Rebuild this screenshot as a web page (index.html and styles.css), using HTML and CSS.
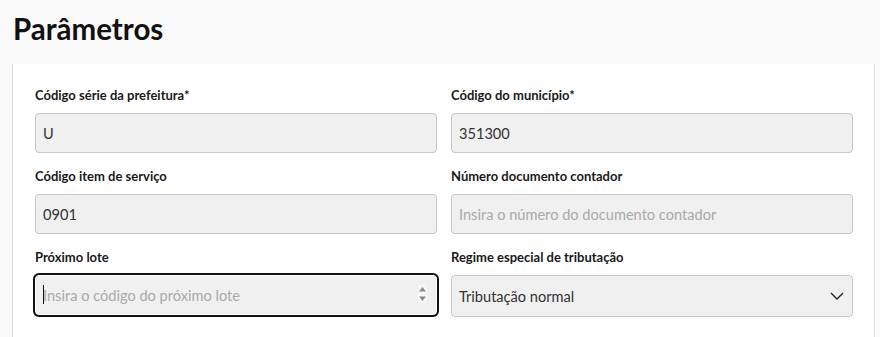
FILE: index.html
```html
<!DOCTYPE html>
<html lang="pt-BR">
<head>
    <meta charset="UTF-8">
    <meta name="viewport" content="width=device-width, initial-scale=1.0">
    <title>Parâmetros</title>
    <link rel="stylesheet" href="styles.css">
</head>
<body>
    <h1 class="page-title">Parâmetros</h1>

    <div class="card">
        <div class="form-grid">
            <div class="field">
                <label class="field-label" for="serie">Código série da prefeitura*</label>
                <input class="field-input" id="serie" type="text" value="U">
            </div>
            <div class="field">
                <label class="field-label" for="municipio">Código do município*</label>
                <input class="field-input" id="municipio" type="text" value="351300">
            </div>
            <div class="field">
                <label class="field-label" for="item">Código item de serviço</label>
                <input class="field-input" id="item" type="text" value="0901">
            </div>
            <div class="field">
                <label class="field-label" for="contador">Número documento contador</label>
                <input class="field-input" id="contador" type="text" placeholder="Insira o número do documento contador">
            </div>
            <div class="field">
                <label class="field-label" for="lote">Próximo lote</label>
                <div class="input-wrap">
                    <input class="field-input is-focused" id="lote" type="number" placeholder="Insira o código do próximo lote">
                    <span class="caret"></span>
                    <span class="spinner">
                        <svg width="9" height="18" viewBox="0 0 9 18">
                            <path d="M4.5 2 L8 6.5 L1 6.5 Z" fill="#8a8a8a"/>
                            <path d="M1 11.5 L8 11.5 L4.5 16 Z" fill="#8a8a8a"/>
                        </svg>
                    </span>
                </div>
            </div>
            <div class="field">
                <label class="field-label" for="regime">Regime especial de tributação</label>
                <div class="input-wrap">
                    <select class="field-input field-select" id="regime">
                        <option>Tributação normal</option>
                    </select>
                    <svg class="chevron" width="14" height="8" viewBox="0 0 14 8">
                        <path d="M1 1 L7 7 L13 1" fill="none" stroke="#222" stroke-width="1.4"/>
                    </svg>
                </div>
            </div>
        </div>
    </div>
</body>
</html>
```

FILE: styles.css
```css
body {
    font-family: 'Lato', 'Noto Sans', sans-serif;
    background-color: #fafafa;
    color: #1a1a1a;
    margin: 0;
    padding: 0;
}

.page-title {
    font-size: 29.5px;
    font-weight: 700;
    line-height: 38px;
    margin: 0;
    padding: 10px 13px 16px;
    color: #111;
}

.card {
    background-color: #fff;
    border-left: 1px solid #dcdcdc;
    border-right: 1px solid #dcdcdc;
    margin: 0 5px 0 12px;
    padding: 23px 21px 30px 22px;
}

.form-grid {
    display: grid;
    grid-template-columns: 1fr 1fr;
    column-gap: 14px;
    row-gap: 15px;
}

.field {
    display: flex;
    flex-direction: column;
    gap: 10px;
}

.field-label {
    font-size: 13px;
    font-weight: 700;
    line-height: 16px;
    color: #1a1a1a;
}

.input-wrap {
    position: relative;
}

.field-input {
    box-sizing: border-box;
    width: 100%;
    height: 40px;
    padding: 0 7px;
    font-family: inherit;
    font-size: 14.6px;
    color: #333;
    background-color: #f0f0f0;
    border: 1px solid #c6c6c6;
    border-radius: 4px;
    outline: none;
}

.field-input::placeholder {
    color: #a9a9a9;
}

.field-input::-webkit-inner-spin-button,
.field-input::-webkit-outer-spin-button {
    -webkit-appearance: none;
    margin: 0;
}

.is-focused {
    border-color: #fff;
    box-shadow: 0 0 0 2px #111;
}

.caret {
    position: absolute;
    left: 8px;
    top: 10px;
    width: 1px;
    height: 19px;
    background-color: #111;
}

.spinner {
    position: absolute;
    right: 10px;
    top: 10px;
    display: flex;
    background-color: #f7f7f7;
}

.field-select {
    -webkit-appearance: none;
    appearance: none;
    height: 42px;
}

.chevron {
    position: absolute;
    right: 9px;
    top: 17px;
    pointer-events: none;
}
```
